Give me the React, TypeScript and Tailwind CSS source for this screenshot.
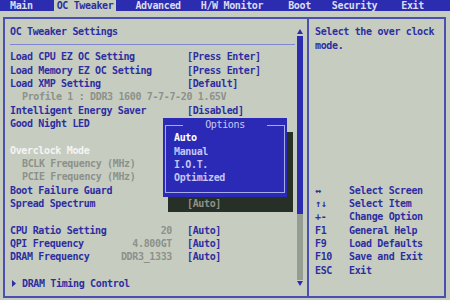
const font = {
  fontFamily: '"DejaVu Sans Mono", "Liberation Mono", monospace',
}

const tabs = [
  { label: "Main", ml: "ml-[10px]" },
  { label: "OC Tweaker", ml: "ml-[21px]", active: true },
  { label: "Advanced", ml: "ml-[19px]" },
  { label: "H/W Monitor", ml: "ml-[20px]" },
  { label: "Boot", ml: "ml-[25px]" },
  { label: "Security", ml: "ml-[21px]" },
  { label: "Exit", ml: "ml-[24px]" },
]

type Row = {
  label?: string
  value?: string
  num?: string
  kind?: "sub" | "active" | "menu"
}

const rows: Row[] = [
  { label: "Load CPU EZ OC Setting", value: "[Press Enter]" },
  { label: "Load Memory EZ OC Setting", value: "[Press Enter]" },
  { label: "Load XMP Setting", value: "[Default]" },
  { label: "Profile 1 : DDR3 1600 7-7-7-20 1.65V", kind: "sub" },
  { label: "Intelligent Energy Saver", value: "[Disabled]" },
  { label: "Good Night LED" },
  {},
  { label: "Overclock Mode", kind: "active" },
  { label: "BCLK Frequency (MHz)", kind: "sub" },
  { label: "PCIE Frequency (MHz)", kind: "sub" },
  { label: "Boot Failure Guard" },
  { label: "Spread Spectrum" },
  {},
  { label: "CPU Ratio Setting", num: "20", value: "[Auto]" },
  { label: "QPI Frequency", num: "4.800GT", value: "[Auto]" },
  { label: "DRAM Frequency", num: "DDR3_1333", value: "[Auto]" },
  {},
  { label: "DRAM Timing Control", kind: "menu" },
]

const keys = [
  ["↔", "Select Screen"],
  ["↑↓", "Select Item"],
  ["+-", "Change Option"],
  ["F1", "General Help"],
  ["F9", "Load Defaults"],
  ["F10", "Save and Exit"],
  ["ESC", "Exit"],
]

const options = ["Auto", "Manual", "I.O.T.", "Optimized"]

function SettingRow({ row }: { row: Row }) {
  if (!row.label) return <div className="h-[13.33px]" />
  const color =
    row.kind === "sub"
      ? "text-[#8d918a]"
      : row.kind === "active"
        ? "text-[#f4f4f4]"
        : "text-[#2e2ea2]"
  return (
    <div className="h-[13.33px] leading-[13.33px] flex whitespace-nowrap">
      <div className={`w-[177px] flex justify-between ${color}`}>
        {row.kind === "menu" ? (
          <span className="flex items-center">
            <svg width="4" height="7" viewBox="0 0 4 7" className="ml-[2px] mr-[6px]">
              <path d="M0 0 L4 3.5 L0 7 Z" fill="#2e2ea2" />
            </svg>
            {row.label}
          </span>
        ) : (
          <span className={row.kind === "sub" ? "pl-[12px]" : ""}>{row.label}</span>
        )}
        {row.num && <span className="mr-[15px] text-[#8d918a]">{row.num}</span>}
      </div>
      {row.value && <span className="text-[#2e2ea2]">{row.value}</span>}
    </div>
  )
}

export default function App() {
  return (
    <div
      className="w-[450px] h-[300px] bg-[#c6cdc0] relative overflow-hidden text-[10px] font-bold tracking-[-0.35px]"
      style={font}
    >
      {/* top menu */}
      <div className="h-[11px] bg-[#2c2cb0] flex leading-[11px] text-[#dcdcee] whitespace-nowrap">
        {tabs.map((t) => (
          <span
            key={t.label}
            className={`${t.ml} ${t.active ? "bg-[#c6cdc0] text-[#2e2ea2] px-[3px]" : ""}`}
          >
            {t.label}
          </span>
        ))}
      </div>

      {/* frame */}
      <div className="ml-[3px] mt-[6px] w-[443px] h-[281px] border-2 border-[#4a50b0] flex">
        <div className="w-[302px] flex">
          <div className="flex-1 pl-[5px] pt-[6.33px]">
            <div className="h-[13.33px] leading-[13.33px] text-[#2e2ea2]">OC Tweaker Settings</div>
            <div className="mt-[5.33px] h-px mr-[2px] bg-[#7f86d2]" />
            <div className="mt-[5.33px]">
              {rows.map((r, i) => (
                <SettingRow key={i} row={r} />
              ))}
            </div>
          </div>
          {/* scrollbar */}
          <div className="w-[6px] mr-[4px] flex flex-col items-center">
            <svg width="6" height="5" viewBox="0 0 6 5" className="mt-[10px]">
              <path d="M3 0 L6 5 L0 5 Z" fill="#2c2cb0" />
            </svg>
            <div className="mt-[2px] w-[6px] h-[244px] bg-[#959d92] flex flex-col">
              <div className="h-[178px] bg-[#2c2cb0]" />
            </div>
            <svg width="6" height="5" viewBox="0 0 6 5" className="mt-[1px]">
              <path d="M0 0 L6 0 L3 5 Z" fill="#2c2cb0" />
            </svg>
          </div>
        </div>
        <div className="w-[2px] bg-[#4a50b0]" />
        <div className="flex-1 pl-[6px] pt-[6.33px] text-[#2e2ea2] whitespace-nowrap">
          <div className="leading-[13.33px]">Select the over clock</div>
          <div className="leading-[13.33px]">mode.</div>
          <div className="mt-[131.67px]">
            {keys.map(([k, d]) => (
              <div key={k} className="h-[13.33px] leading-[13.33px] flex">
                <span className="w-[34px]">{k}</span>
                <span>{d}</span>
              </div>
            ))}
          </div>
        </div>
      </div>

      {/* popup shadow */}
      <div className="absolute left-[168px] top-[132px] w-[125px] h-[80px] bg-[#263026]">
        <div className="absolute left-[19px] top-[65px] leading-[13.33px] text-[#8d918a]">[Auto]</div>
      </div>

      {/* options popup */}
      <div className="absolute left-[163px] top-[118px] w-[124px] h-[79px] bg-[#2a2ab6]">
        <div className="absolute left-[2px] right-[2px] top-[6.5px] bottom-[4px] border border-[#a6aae6]" />
        <div className="absolute inset-x-0 top-0 h-[13.33px] flex justify-center">
          <span className="leading-[13.33px] bg-[#2a2ab6] px-[22px] text-[#c8caf4] font-normal">Options</span>
        </div>
        <div className="absolute left-[11px] top-[13.33px]">
          {options.map((o, i) => (
            <div
              key={o}
              className={`h-[13.33px] leading-[13.33px] ${i === 0 ? "text-white" : "text-[#c4c6f4]"}`}
            >
              {o}
            </div>
          ))}
        </div>
      </div>
    </div>
  )
}
